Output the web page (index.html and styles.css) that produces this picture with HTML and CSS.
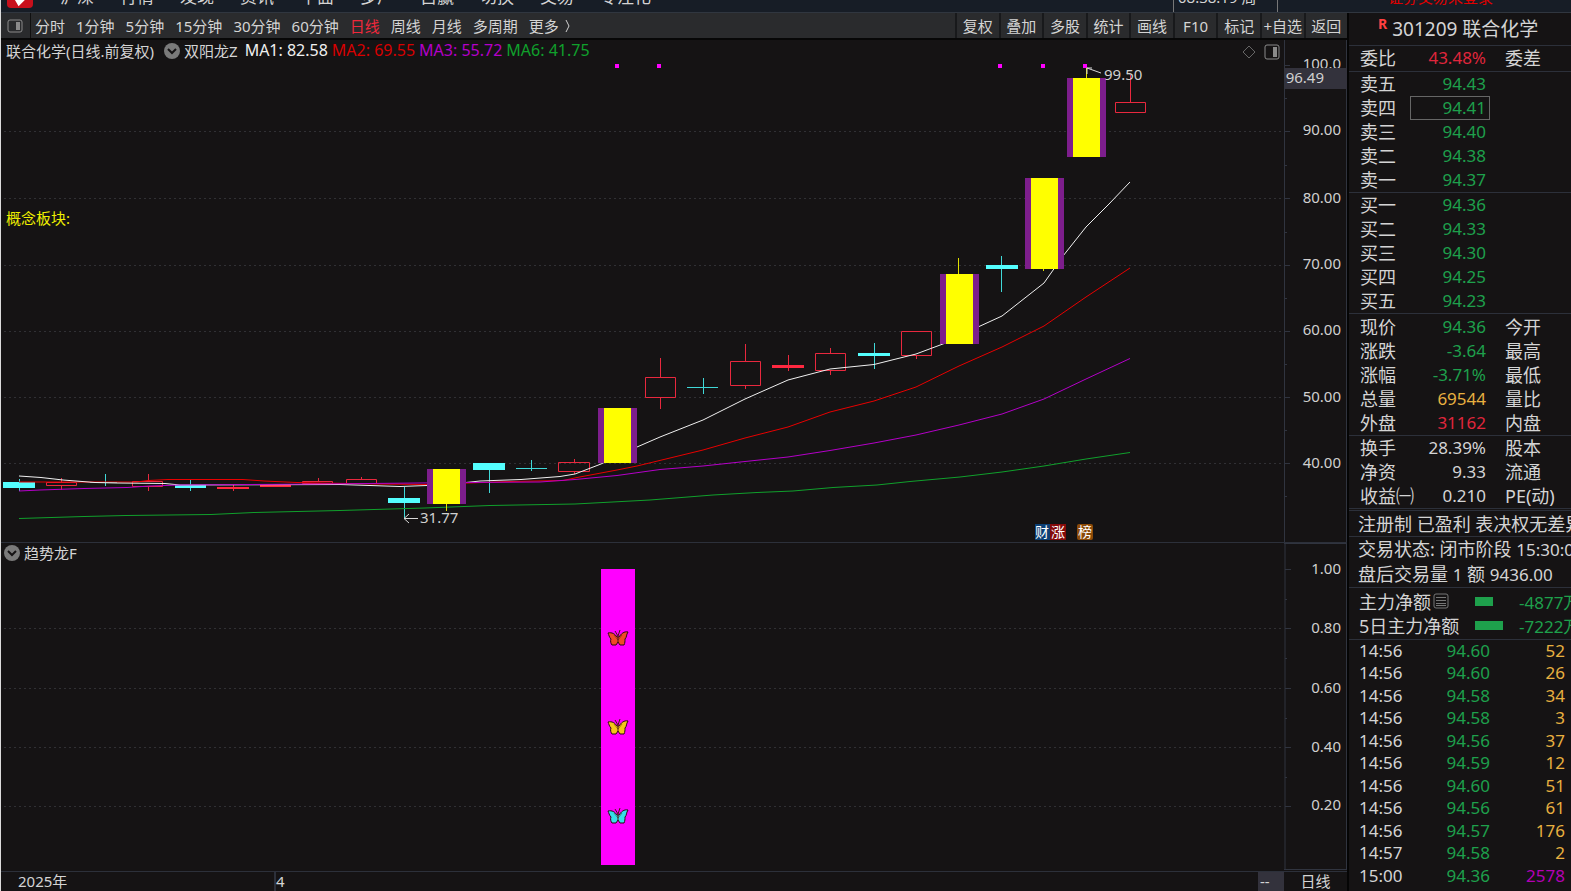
FILE: index.html
```html
<!DOCTYPE html>
<html lang="zh-CN">
<head>
  <meta charset="UTF-8" />
  <meta name="viewport" content="width=device-width, initial-scale=1.0"/>
  <title>301209 联合化学</title>
  <link rel="stylesheet" href="styles.css">
</head>
<body>
  <header>
    <svg class="logo" width="26" height="24" viewBox="0 0 26 24">
      <rect width="26" height="24" rx="4" fill="#c8101c"/>
      <path d="M8 12 L12 19 L19 12" fill="none" stroke="#fff" stroke-width="4"/>
    </svg>
    <nav class="menu">
      <a href="#">沪深</a>
      <a href="#">行情</a>
      <a href="#">发现</a>
      <a href="#">资讯</a>
      <a href="#">平面</a>
      <a href="#">多户</a>
      <a href="#">自赢</a>
      <a href="#">切换</a>
      <a href="#">交易</a>
      <a href="#">专注化</a>
    </nav>
    <div class="status">
      <span class="clock">08:38:19 周</span>
      <span class="login">证券交易未登录</span>
    </div>
  </header>

  <div class="app">
    <main>
      <div class="toolbar">
        <button class="side-btn" aria-label="侧栏">
          <svg width="16" height="14" viewBox="0 0 16 14"><rect x="1" y="1" width="14" height="12" rx="2" fill="none" stroke="#8a8a8a"/><rect x="9" y="3" width="4" height="8" fill="#8a8a8a"/></svg>
        </button>
        <div class="periods">
          <button>分时</button>
          <button>1分钟</button>
          <button>5分钟</button>
          <button>15分钟</button>
          <button>30分钟</button>
          <button>60分钟</button>
          <button class="active">日线</button>
          <button>周线</button>
          <button>月线</button>
          <button>多周期</button>
          <button>更多 <svg width="6" height="14" viewBox="0 0 6 14"><path d="M1 1 L4 7 L1 13" fill="none" stroke="#d0d0d0"/></svg></button>
        </div>
        <div class="tools">
          <button>复权</button>
          <button>叠加</button>
          <button>多股</button>
          <button>统计</button>
          <button>画线</button>
          <button>F10</button>
          <button>标记</button>
          <button>+自选</button>
          <button>返回</button>
        </div>
      </div>

      <!-- K线主图 -->
      <section class="panel">
        <div class="plot">
          <div class="info">
            <span>联合化学(日线.前复权)</span>
            <svg class="drop" width="16" height="16" viewBox="0 0 16 16"><circle cx="8" cy="8" r="8" fill="#7a7a7a"/><path d="M4 6 L8 10 L12 6" fill="none" stroke="#151314" stroke-width="2"/></svg>
            <span>双阳龙Z</span>
            <div class="legend">
              <span class="ma1">MA1: 82.58</span>
              <span class="ma2">MA2: 69.55</span>
              <span class="ma3">MA3: 55.72</span>
              <span class="ma6">MA6: 41.75</span>
            </div>
            <span class="corner">
              <svg width="14" height="14" viewBox="0 0 14 14"><path d="M7 1 L13 7 L7 13 L1 7 Z" fill="none" stroke="#666"/></svg>
              <svg width="16" height="16" viewBox="0 0 16 16"><rect x="1" y="1" width="14" height="14" rx="2" fill="none" stroke="#8a8a8a"/><rect x="9" y="3" width="4" height="10" fill="#8a8a8a"/></svg>
            </span>
          </div>
          <svg class="chart" viewBox="1 62 1283 480">
            <g class="grid">
              <path d="M4 131.500H1284 M4 198.500H1284 M4 265.500H1284 M4 331.500H1284 M4 397.500H1284 M4 463.500H1284"/>
            </g>
            <g class="up">
              <path d="M61.500 478V482 M61.500 486V490 M148.500 474V481 M148.500 487V491 M233.500 485V491 M318.500 478V481 M361.500 477V480 M574.500 459V462 M574.500 472V474 M660.500 358V377 M660.500 398V409 M745.500 344V361 M745.500 385V389 M788.500 355V371 M830.500 348V353 M830.500 370V375 M916.500 355V359 M1130.500 75V102"/>
              <path d="M46.500 482.500h30v3h-30z M132.500 481.500h30v5h-30z M302.500 481.500h30v2h-30z M346.500 479.500h30v4h-30z M558.500 462.500h31v9h-31z M645.500 377.500h30v20h-30z M730.500 361.500h30v24h-30z M815.500 353.500h30v17h-30z M901.500 331.500h30v24h-30z M1115.500 102.500h30v10h-30z"/>
              <path class="flat" d="M217 487h32v2h-32z M260 485h31v2h-31z M772 365h32v3h-32z"/>
            </g>
            <g class="down">
              <path d="M19.500 479V491 M105.500 474V486 M90 482.500H117 M190.500 480V491 M404.500 487V518 M489.500 470V493 M531.500 460V471 M516 468.500H547 M703.500 378V394 M687 387.500H718 M874.500 343V369 M1001.500 256V292"/>
              <path class="flat" d="M3 482h32v6h-32z M175 485h31v3h-31z M388 498h32v5h-32z M473 463h32v7h-32z M858 353h32v3h-32z M986 265h32v4h-32z"/>
            </g>
            <g class="ma">
              <polyline class="l2" points="19,482 137,482 148,480.500 168,479.500 243,479.500 264,481 297,482.500 375,484 427,484.500 510,481.500 563,480.500 577,477.500 617,470 637,466 703,450 745,438 788,427 830,412 874,401 916,387 959,366 1002,347 1044,326 1086,297 1130,268"/>
              <polyline class="l1" points="19,476 41,477.500 63,480 95,482.500 117,483 165,483.500 180,485 340,484.500 400,486.500 427,485.500 466,482.500 480,481 521,479.500 560,476.500 575,474 601,464 637,447 660,437 703,420 745,399 788,380 830,369 874,364.500 916,354 959,338 978,327 1002,316 1044,283 1063,256 1086,227 1109,204 1130,182"/>
              <polyline class="l3" points="19,491 40,490 84,488.500 127,487.500 150,486 180,485 320,484 466,482.500 540,482 575,479.500 617,475.500 660,469.500 703,466 745,461.500 788,457 830,450.500 874,443 916,435 959,425 1002,414 1044,399 1086,379 1130,358.500"/>
              <polyline class="l6" points="19,518.500 84,516.500 126,515.500 211,514.500 254,512.500 340,510.500 425,508 490,505.500 575,504 650,500 713,495 757,492.500 793,491 833,487.500 877,485 910,481.500 960,477 1002,472 1044,466 1086,459 1130,452.500"/>
            </g>
            <g class="limit-edge">
              <rect x="427" y="469" width="39" height="35"/>
              <rect x="598" y="408" width="39" height="55"/>
              <rect x="940" y="274" width="39" height="70"/>
              <rect x="1025" y="178" width="39" height="91"/>
              <rect x="1067" y="78" width="39" height="79"/>
            </g>
            <g class="limit">
              <rect x="433" y="469" width="27" height="35"/>
              <rect x="604" y="408" width="27" height="55"/>
              <rect x="946" y="274" width="27" height="70"/>
              <rect x="1031" y="178" width="27" height="91"/>
              <rect x="1073" y="78" width="27" height="79"/>
              <path d="M446.500 504V511 M958.500 258V274 M1043.500 269V271 M1086.500 67V78"/>
            </g>
            <path class="dots" d="M615 64h4v4h-4z M657 64h4v4h-4z M998 64h4v4h-4z M1041 64h4v4h-4z M1083 64h4v4h-4z"/>
            <path class="arrow" d="M1087 68L1101 73 M1087 74V68H1092 M404 518.500H418 M409 514L404 518.500L409 523"/>
            <text x="1104" y="80">99.50</text>
            <text x="420" y="523">31.77</text>
            <text class="concept" x="6" y="224">概念板块:</text>
            <g class="tags">
              <rect x="1035" y="524" width="15" height="16" fill="#0b3f74"/>
              <rect x="1050" y="524" width="16" height="16" fill="#850a0a"/>
              <rect x="1077" y="524" width="16" height="16" rx="2" fill="#8a4a08"/>
              <text x="1035" y="537">财</text>
              <text x="1051" y="537">涨</text>
              <text x="1078" y="537">榜</text>
            </g>
          </svg>
        </div>
        <svg class="axis" viewBox="1284 40 63 502">
          <path d="M1284.500 40V542 M1346.500 40V542"/>
          <path d="M1285 65.500h5 M1285 98.500h2 M1285 131.500h5 M1285 165.500h2 M1285 198.500h5 M1285 232.500h2 M1285 265.500h5 M1285 298.500h2 M1285 331.500h5 M1285 364.500h2 M1285 397.500h5 M1285 430.500h2 M1285 463.500h5 M1285 496.500h2"/>
          <text x="1341" y="69">100.0</text>
          <rect x="1285" y="68" width="62" height="21" fill="#33323c"/>
          <text x="1324" y="83">96.49</text>
          <text x="1341" y="135">90.00</text>
          <text x="1341" y="203">80.00</text>
          <text x="1341" y="269">70.00</text>
          <text x="1341" y="335">60.00</text>
          <text x="1341" y="402">50.00</text>
          <text x="1341" y="468">40.00</text>
        </svg>
      </section>

      <!-- 副图指标 -->
      <section class="panel sub">
        <div class="plot">
          <div class="info">
            <svg class="drop" width="16" height="16" viewBox="0 0 16 16"><circle cx="8" cy="8" r="8" fill="#7a7a7a"/><path d="M4 6 L8 10 L12 6" fill="none" stroke="#151314" stroke-width="2"/></svg>
            <span>趋势龙F</span>
          </div>
          <svg class="chart" viewBox="1 565 1283 305">
            <defs>
              <g id="butterfly">
                <path d="M-1 -1 C-3 -4 -6 -6 -10 -5 C-9 -3 -9 -1 -7 1 C-8 3 -7 6 -6 7 L-2 7 L0 4 L2 7 L6 7 C7 5 7 3 7 1 C9 -1 8 -3 10 -6 C6 -7 3 -4 1 -1 Z" stroke="#2c0c10" stroke-width="1" stroke-linejoin="round"/>
                <path d="M0 4V-2L-3 -7 M0 -2L2 -8" fill="none" stroke="#4a1a14"/>
                <path d="M-4 -3L0 2L4 -3" fill="none" stroke="#4a1a14" stroke-opacity="0.5"/>
              </g>
            </defs>
            <g class="grid">
              <path d="M4 628.500H1284 M4 688.500H1284 M4 747.500H1284 M4 806.500H1284"/>
            </g>
            <rect x="601" y="569" width="34" height="296" fill="#ff00ff"/>
            <use href="#butterfly" x="618" y="638" fill="#f04a28"/>
            <use href="#butterfly" x="618" y="727" fill="#f5c518"/>
            <use href="#butterfly" x="618" y="816" fill="#35dfe8"/>
          </svg>
        </div>
        <svg class="axis" viewBox="1284 543 63 328">
          <path d="M1285 543V870 M1346.500 543V870 M1284 543.500H1347 M1284 869.500H1347"/>
          <path d="M1285 569.500h6 M1285 599.500h2 M1285 628.500h6 M1285 658.500h2 M1285 688.500h6 M1285 718.500h2 M1285 747.500h6 M1285 777.500h2 M1285 806.500h6"/>
          <text x="1341" y="574">1.00</text>
          <text x="1341" y="633">0.80</text>
          <text x="1341" y="693">0.60</text>
          <text x="1341" y="752">0.40</text>
          <text x="1341" y="810">0.20</text>
        </svg>
      </section>

      <footer>
        <span class="year">2025年</span>
        <span class="month">4</span>
        <span class="dash">--</span>
        <span class="unit">日线</span>
      </footer>
    </main>

    <aside>
      <h1><sup>R</sup>301209 联合化学</h1>
      <table class="quote ratio">
        <tr><th>委比</th><td class="red">43.48%</td><th>委差</th></tr>
      </table>
      <table class="quote">
        <tr><th>卖五</th><td class="green">94.43</td><th></th></tr>
        <tr><th>卖四</th><td class="green picked">94.41</td><th></th></tr>
        <tr><th>卖三</th><td class="green">94.40</td><th></th></tr>
        <tr><th>卖二</th><td class="green">94.38</td><th></th></tr>
        <tr><th>卖一</th><td class="green">94.37</td><th></th></tr>
      </table>
      <table class="quote">
        <tr><th>买一</th><td class="green">94.36</td><th></th></tr>
        <tr><th>买二</th><td class="green">94.33</td><th></th></tr>
        <tr><th>买三</th><td class="green">94.30</td><th></th></tr>
        <tr><th>买四</th><td class="green">94.25</td><th></th></tr>
        <tr><th>买五</th><td class="green">94.23</td><th></th></tr>
      </table>
      <table class="quote price">
        <tr><th>现价</th><td class="green">94.36</td><th>今开</th></tr>
        <tr><th>涨跌</th><td class="green">-3.64</td><th>最高</th></tr>
        <tr><th>涨幅</th><td class="green">-3.71%</td><th>最低</th></tr>
        <tr><th>总量</th><td class="gold">69544</td><th>量比</th></tr>
        <tr><th>外盘</th><td class="red">31162</td><th>内盘</th></tr>
      </table>
      <table class="quote base">
        <tr><th>换手</th><td>28.39%</td><th>股本</th></tr>
        <tr><th>净资</th><td>9.33</th><th>流通</th></tr>
        <tr><th>收益㈠</th><td>0.210</td><th>PE(动)</th></tr>
      </table>
      <p class="note first">注册制 已盈利 表决权无差异</p>
      <p class="note">交易状态: 闭市阶段 <span>15:30:00</span><br>盘后交易量 <span>1</span> 额 <span>9436.00</span></p>
      <div class="flow">
        <div class="flow-row">
          <span>主力净额<svg width="16" height="16" viewBox="0 0 16 16"><rect x="1" y="1" width="14" height="14" rx="2" fill="none" stroke="#777"/><path d="M3 4.500H13 M3 7.500H13 M3 10.500H13 M3 12.500H13" stroke="#777"/></svg></span>
          <i class="bar" style="width:18px"></i>
          <b class="green">-4877万</b>
        </div>
        <div class="flow-row">
          <span>5日主力净额</span>
          <i class="bar" style="width:28px"></i>
          <b class="green">-7222万</b>
        </div>
      </div>
      <table class="ticks">
        <tr><th>14:56</th><td>94.60</td><td>52</td></tr>
        <tr><th>14:56</th><td>94.60</td><td>26</td></tr>
        <tr><th>14:56</th><td>94.58</td><td>34</td></tr>
        <tr><th>14:56</th><td>94.58</td><td>3</td></tr>
        <tr><th>14:56</th><td>94.56</td><td>37</td></tr>
        <tr><th>14:56</th><td>94.59</td><td>12</td></tr>
        <tr><th>14:56</th><td>94.60</td><td>51</td></tr>
        <tr><th>14:56</th><td>94.56</td><td>61</td></tr>
        <tr><th>14:56</th><td>94.57</td><td>176</td></tr>
        <tr><th>14:57</th><td>94.58</td><td>2</td></tr>
        <tr><th>15:00</th><td>94.36</td><td class="big">2578</td></tr>
      </table>
    </aside>
  </div>
</body>
</html>
```

FILE: styles.css
```css
* {
  margin: 0;
  padding: 0;
  box-sizing: border-box;
}
body {
  background: #151314;
  color: #d4d4d4;
  font-family: "Noto Sans", "Noto Sans CJK SC", sans-serif;
  font-size: 15px;
  height: 100vh;
  overflow: hidden;
  border-left: 1px solid #dcdcdc;
}
button {
  background: none;
  border: none;
  color: inherit;
  font: inherit;
  white-space: nowrap;
  cursor: pointer;
}
a {
  color: inherit;
  text-decoration: none;
}
svg {
  display: block;
}
header {
  height: 13px;
  background: #171d26;
  border-bottom: 1px solid #30363f;
  display: flex;
  align-items: flex-end;
  overflow: hidden;
  padding-left: 6px;
}
.logo {
  margin-bottom: 4px;
}
.menu {
  flex: 1;
  display: flex;
  gap: 26px;
  padding: 0 0 5px 27px;
  font-size: 17px;
  line-height: 20px;
}
.status {
  width: 398px;
  display: flex;
  align-items: flex-end;
  line-height: 20px;
}
.clock {
  width: 105px;
  padding: 0 0 5px 4px;
  border-left: 1px solid #777;
  border-right: 1px solid #777;
}
.login {
  padding: 0 0 5px 110px;
  color: #e00000;
}
.app {
  display: grid;
  grid-template-columns: minmax(0, 1fr) 224px;
}

/* toolbar */
.toolbar {
  height: 27px;
  display: flex;
  background: #2a2b2d;
  border-bottom: 2px solid #070707;
}
.side-btn {
  width: 30px;
  padding-left: 6px;
  border-right: 1px solid #101010;
}
.periods {
  flex: 1;
  display: flex;
  gap: 11px;
  padding-left: 4px;
}
.periods button {
  display: flex;
  align-items: center;
  gap: 6px;
}
.periods .active {
  color: #f0283c;
}
.tools {
  display: flex;
  width: 392px;
}
.tools button {
  flex: 1 1 0;
  min-width: 0;
  border-left: 2px solid #18191b;
}

/* charts */
.panel {
  display: flex;
  border-bottom: 1px solid #2c303a;
}
.plot {
  flex: 1283;
  min-width: 0;
}
.axis {
  flex: 63;
  min-width: 0;
}
.info {
  height: 22px;
  display: flex;
  align-items: center;
  padding: 0 0 2px 5px;
  white-space: nowrap;
}
.sub .info {
  padding: 0 0 4px 3px;
}
.drop {
  flex: none;
  margin: 2px 4px 0 10px;
}
.sub .drop {
  margin-left: 0;
}
.legend {
  display: flex;
  gap: 4px;
  margin-left: 7px;
  font-size: 16px;
  line-height: 20px;
}
.corner {
  display: flex;
  align-items: center;
  gap: 8px;
  margin-left: auto;
  padding: 3px 4px 0 0;
}
.ma1 { color: #f0f0f0; }
.ma2 { color: #d80000; }
.ma3 { color: #b400c8; }
.ma6 { color: #10a02c; }
.chart {
  width: 100%;
  font-size: 15px;
}
.chart text,
.axis text {
  fill: #d0d0d0;
}
.chart .concept {
  fill: #f0f000;
}
.chart .tags text {
  fill: #fff;
  font-size: 14px;
}
.axis text {
  text-anchor: end;
}
.axis path {
  fill: none;
  stroke: #30343f;
}
.grid path {
  stroke: #303034;
  stroke-dasharray: 2 3;
}
.up path {
  fill: none;
  stroke: #e8283e;
}
.up .flat {
  fill: #ff2840;
  stroke: none;
}
.down path {
  stroke: #40d8d8;
}
.down .flat {
  fill: #54ffff;
  stroke: none;
}
.ma polyline {
  fill: none;
  stroke-width: 1;
}
.ma .l1 { stroke: #f0f0f0; }
.ma .l2 { stroke: #e80000; }
.ma .l3 { stroke: #b400c8; }
.ma .l6 { stroke: #10a02c; }
.limit-edge {
  fill: #7d1e8c;
}
.limit {
  fill: #ffff00;
  stroke: none;
}
.limit path {
  stroke: #e0e000;
}
.dots {
  fill: #ff00ff;
}
.arrow {
  fill: none;
  stroke: #d8d8d8;
}
footer {
  height: 20px;
  display: flex;
  line-height: 18px;
}
.year {
  width: 273px;
  padding-left: 17px;
}
.month {
  flex: 1;
  border-left: 2px solid #2c303a;
}
.dash {
  width: 26px;
  background: #33323c;
  padding-left: 2px;
}
.unit {
  width: 63px;
  text-align: center;
}

/* quote side */
aside {
  border-left: 2px solid #050505;
  overflow: hidden;
  font-size: 18px;
  white-space: nowrap;
}
h1 {
  height: 33px;
  line-height: 32px;
  padding-left: 29px;
  font-size: 19px;
  font-weight: normal;
  border-bottom: 1px solid #2c303a;
}
sup {
  color: #ff4040;
  font-size: 14px;
  font-weight: bold;
  line-height: 0;
  margin-right: 5px;
}
table {
  display: block;
  width: 100%;
}
tbody {
  display: block;
}
th {
  font-weight: normal;
  text-align: left;
}
.quote {
  border-bottom: 1px solid #2c303a;
}
.quote tr {
  display: grid;
  grid-template-columns: 61px 80px 1fr;
  height: 24px;
  line-height: 24px;
}
.quote th:first-child {
  padding-left: 11px;
}
.quote th:last-child {
  padding-left: 15px;
}
.quote td {
  font-size: 17px;
  text-align: right;
  padding-right: 4px;
}
.quote .picked {
  outline: 1px solid #666;
  outline-offset: -1px;
}
.ratio {
  padding-bottom: 1px;
}
.price {
  padding-top: 1px;
}
.quote.base {
  border-bottom: 3px double #2c303a;
}
.red { color: #e0263c; }
.green { color: #1ea04c; }
.gold { color: #e8b040; }
.note {
  line-height: 24px;
  padding-left: 9px;
  border-bottom: 1px solid #2c303a;
}
.note.first {
  padding-top: 1px;
}
.note span {
  font-size: 17px;
}
.flow {
  padding-bottom: 3px;
  border-bottom: 1px solid #2c303a;
}
.flow-row {
  display: grid;
  grid-template-columns: 126px 44px 1fr;
  align-items: center;
  height: 24px;
}
.flow-row span {
  display: flex;
  align-items: center;
  gap: 2px;
  padding-left: 10px;
}
.flow-row b {
  font-size: 17px;
  font-weight: normal;
}
.bar {
  height: 9px;
  background: #1ea04c;
}
.ticks tr {
  display: grid;
  grid-template-columns: 61px 80px 75px;
  height: 22px;
  line-height: 22px;
  font-size: 17px;
}
.ticks tr:nth-child(even) {
  height: 23px;
}
.ticks th {
  padding-left: 10px;
}
.ticks td {
  text-align: right;
  color: #1ea04c;
}
.ticks td:last-child {
  color: #e8b040;
}
.ticks td.big {
  color: #b400b4;
}
```
